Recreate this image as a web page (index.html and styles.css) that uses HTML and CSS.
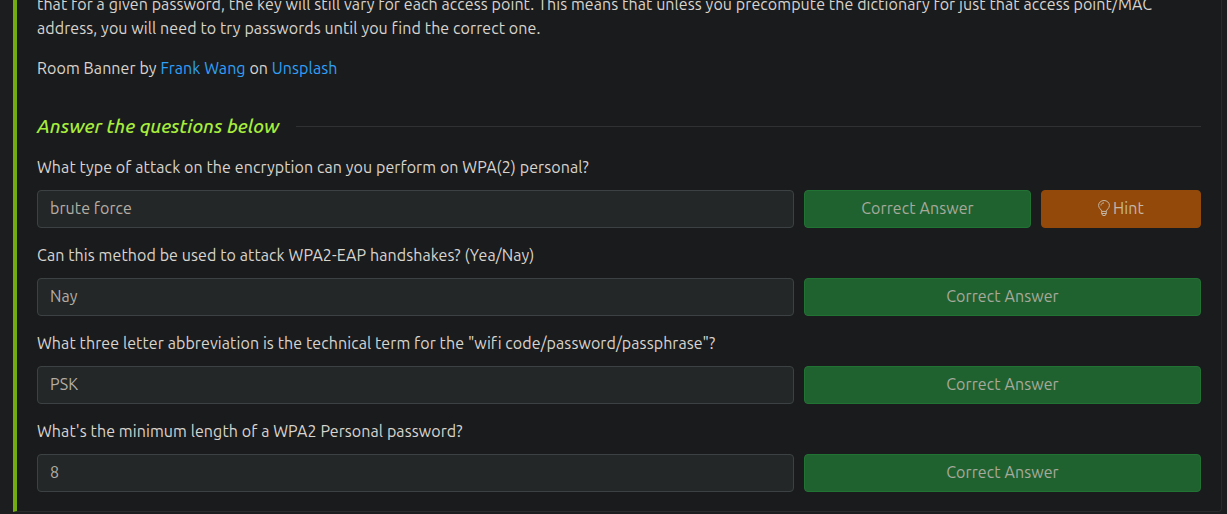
FILE: index.html
```html
<!DOCTYPE html>
<html lang="en">
<head>
<meta charset="utf-8">
<title>Room task</title>
<link rel="stylesheet" href="styles.css">
</head>
<body>
<main class="task">
  <p class="copy">that for a given password, the key will still vary for each access point. This means that unless you precompute the dictionary for just that access point/MAC<br>address, you will need to try passwords until you find the correct one.</p>
  <p class="copy">Room Banner by <a class="link">Frank Wang</a> on <a class="link">Unsplash</a></p>
  <div class="heading"><h2 class="heading-text">Answer the questions below</h2><span class="rule"></span></div>
  <section class="question">
    <p class="prompt">What type of attack on the encryption can you perform on WPA(2) personal?</p>
    <div class="row"><div class="field">brute force</div><div class="button correct"><span>Correct Answer</span></div><div class="button hint">
      <svg class="bulb" viewBox="0 0 12 16" fill="none" stroke="currentColor"><path d="M3.7 11.4C3.7 9.4.6 8.6.6 5.4A5.4 4.9 0 0 1 11.4 5.4C11.4 8.6 8.3 9.4 8.3 11.4ZM3.7 11.4V13.6L4.8 15.5H7.2L8.3 13.6V11.4M3.7 13.5H8.3M3 5.5C3 4 4.2 2.9 6 2.9"/></svg><span>Hint</span></div></div>
  </section>
  <section class="question">
    <p class="prompt">Can this method be used to attack WPA2-EAP handshakes? (Yea/Nay)</p>
    <div class="row"><div class="field">Nay</div><div class="button correct"><span>Correct Answer</span></div></div>
  </section>
  <section class="question">
    <p class="prompt">What three letter abbreviation is the technical term for the "wifi code/password/passphrase"?</p>
    <div class="row"><div class="field">PSK</div><div class="button correct"><span>Correct Answer</span></div></div>
  </section>
  <section class="question">
    <p class="prompt">What's the minimum length of a WPA2 Personal password?</p>
    <div class="row"><div class="field">8</div><div class="button correct"><span>Correct Answer</span></div></div>
  </section>
</main>
</body>
</html>
```
FILE: styles.css
```css
* { box-sizing: border-box; }
body { margin: 0; height: 514px; overflow: hidden; background: #1c1d1f; color: #d8d4ce; font: 16px/24px Ubuntu, "Noto Sans", sans-serif; letter-spacing: 0.09px; }
.task { height: 512px; margin: 0 5px 0 13px; padding: 0 20px; border: solid #292a2c; border-width: 0 1px 1px 4px; border-left-color: #72ac10; border-bottom-right-radius: 4px; background: #1a1b1d; overflow: hidden; }
p, h2 { margin: 0; }
.copy { margin-bottom: 16px; white-space: nowrap; }
.copy:first-child { margin-top: -8px; }
.link { color: #30a0f7; }
.heading { display: flex; align-items: center; height: 24px; margin-top: 34px; gap: 16px; }
.heading-text { flex: none; width: 243px; color: #a7ee3d; font-size: 19.2px; font-weight: 500; font-style: italic; line-height: 24px; letter-spacing: 0.02px; white-space: nowrap; }
.rule { flex: 1; height: 1px; background: #303133; }
.question { height: 88px; }
.heading + .question { margin-top: 17px; }
.prompt { height: 35px; white-space: nowrap; }
.row { display: flex; gap: 10px; height: 38px; }
.field { width: 757px; height: 38px; padding: 5px 12px; border: 1px solid #3c4143; border-radius: 4px; background: #232728; color: #b5aea4; }
.button { display: flex; align-items: center; justify-content: center; flex: 1; padding-bottom: 2px; border: 1px solid; border-radius: 4px; }
.correct { background: #20622f; border-color: #217333; color: #a6a99c; }
.hint { flex: none; width: 160px; gap: 3px; background: #93490a; border-color: #93490a; color: #c5b7a6; }
.bulb { width: 12px; height: 16px; }
```
